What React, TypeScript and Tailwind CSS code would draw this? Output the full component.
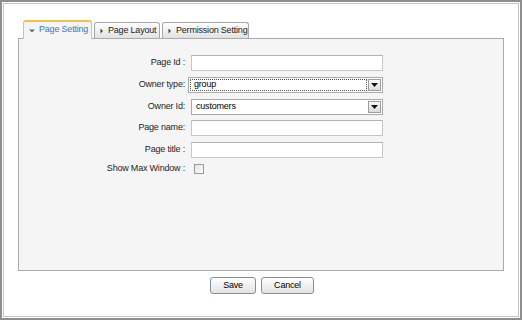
const Arrow = ({ dir }: { dir: 'down' | 'right' }) =>
  dir === 'down' ? (
    <svg width="6" height="4" viewBox="0 0 6 4" className="shrink-0 mt-[1px]">
      <path d="M0 0.5 H6 L3 3.5 Z" fill="#6b6b6b" />
    </svg>
  ) : (
    <svg width="4" height="6" viewBox="0 0 4 6" className="shrink-0">
      <path d="M0.5 0.5 L3 3 L0.5 5.5 Z" fill="#444" />
    </svg>
  );

const SelectBox = ({ value, focused, wide }: { value: string; focused?: boolean; wide?: boolean }) => (
  <div
    className={`h-[16px] flex items-center border border-[#a9a9a9] bg-white ${
      wide ? 'w-[195px] -ml-[3px]' : 'w-[192px]'
    }`}
  >
    <div
      className={`flex-1 h-[12px] mx-[1px] flex items-center pl-[3px] text-black ${
        focused ? 'border border-dotted border-[#555]' : ''
      }`}
    >
      {value}
    </div>
    <div className="w-[13px] h-[12px] mr-[1px] flex items-center justify-center border border-[#9d9d9d] bg-gradient-to-b from-[#fafafa] to-[#dcdcdc]">
      <svg width="7" height="4" viewBox="0 0 7 4">
        <path d="M0 0 H7 L3.5 4 Z" fill="#111" />
      </svg>
    </div>
  </div>
);

const TextBox = () => (
  <div className="w-[192px] h-[16px] border border-[#c6c6c6] border-t-[#b3b3b3] bg-white" />
);

const Row = ({ label, children, className = '' }: { label: string; children: React.ReactNode; className?: string }) => (
  <div className={`flex items-center h-[16px] ${className}`}>
    <div className="w-[172px] pr-[6px] text-right text-[#1e1e1e] whitespace-nowrap">{label}</div>
    {children}
  </div>
);

export default function App() {
  return (
    <div
      className="w-[522px] h-[320px] bg-white border-2 border-[#8e8e8e] p-px text-[9px] tracking-[-0.2px]"
      style={{ fontFamily: '"Liberation Sans", Arial, sans-serif' }}
    >
      <div className="h-full border border-[#c4c4c4] bg-white flex flex-col pl-[14px] pr-[14px] pt-[16px]">
        {/* tabs */}
        <div className="flex items-end pl-[5px] gap-[2px] h-[18px]">
          <div className="relative z-10 -mb-px w-[69px] h-[19px] flex items-center gap-[4px] pl-[5px] pb-[1px] bg-[#f5f5f5] border-x border-[#c3c3c3] border-t-2 border-t-[#f2c245] rounded-t-[3px] text-[#3a78c9]">
            <Arrow dir="down" />
            <span>Page Setting</span>
          </div>
          <div className="w-[66px] h-[16px] flex items-center gap-[4px] pl-[5px] border border-b-0 border-[#a8a8a8] rounded-t-[3px] bg-gradient-to-b from-white to-[#e2e2e2] text-[#222]">
            <Arrow dir="right" />
            <span>Page Layout</span>
          </div>
          <div className="w-[87px] h-[16px] flex items-center gap-[4px] pl-[5px] border border-b-0 border-[#a8a8a8] rounded-t-[3px] bg-gradient-to-b from-white to-[#e2e2e2] text-[#222]">
            <Arrow dir="right" />
            <span>Permission Setting</span>
          </div>
        </div>

        {/* panel */}
        <div className="h-[233px] border border-[#aaaaaa] bg-[#f5f5f5] pt-[16px] flex flex-col">
          <Row label="Page Id :">
            <TextBox />
          </Row>
          <Row label="Owner type:" className="mt-[6px]">
            <SelectBox value="group" focused wide />
          </Row>
          <Row label="Owner Id:" className="mt-[6px]">
            <SelectBox value="customers" />
          </Row>
          <Row label="Page name:" className="mt-[5px]">
            <TextBox />
          </Row>
          <Row label="Page title :" className="mt-[6px]">
            <TextBox />
          </Row>
          <Row label="Show Max Window :" className="mt-[3px]">
            <div className="ml-[3px] w-[10px] h-[10px] border border-[#9a9a9a] bg-gradient-to-br from-[#e6e6e6] to-[#fbfbfb]" />
          </Row>
        </div>

        {/* buttons */}
        <div className="flex justify-center gap-[5px] mt-[6px] pl-[2px]">
          <button className="w-[46px] h-[17px] border border-[#7b8eac] rounded-[3px] bg-gradient-to-b from-white to-[#e3e3e3] text-black">
            Save
          </button>
          <button className="w-[53px] h-[17px] border border-[#7b8eac] rounded-[3px] bg-gradient-to-b from-white to-[#e3e3e3] text-black">
            Cancel
          </button>
        </div>
      </div>
    </div>
  );
}
